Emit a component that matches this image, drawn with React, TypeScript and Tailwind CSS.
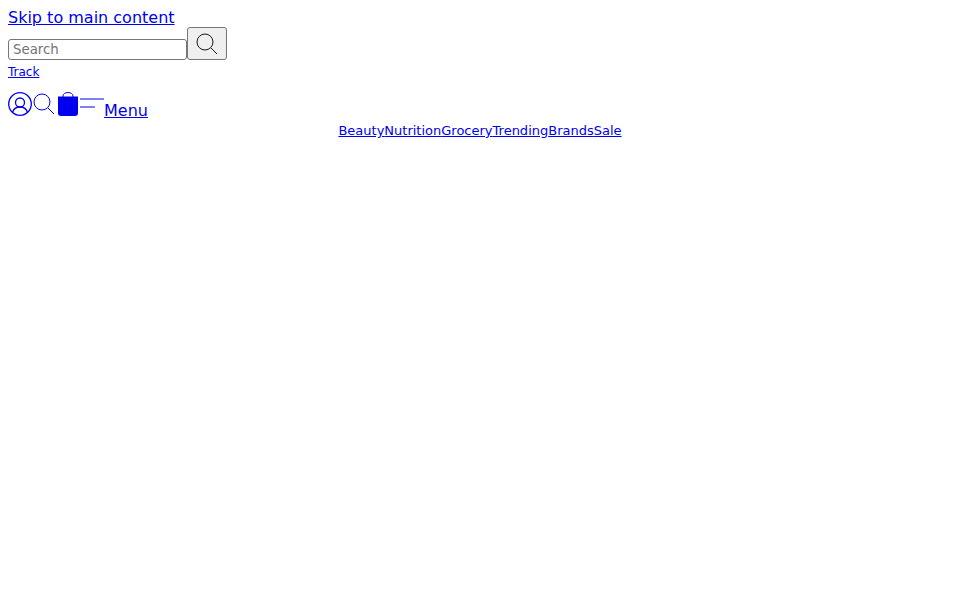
import React from 'react';

const navLinks = ['Beauty', 'Nutrition', 'Grocery', 'Trending', 'Brands', 'Sale'];

const linkClass = 'text-[#0000ee] underline';

const SearchIcon = ({ color }: { color: string }) => (
    <svg width="24" height="24" viewBox="0 0 24 24" fill="none" stroke={color} strokeWidth="1">
        <circle cx="10" cy="10" r="8" />
        <path d="M16 16l6 6" />
    </svg>
);

const App: React.FC = () => {
    return (
        <div className="min-h-[600px] bg-white px-2 font-['DejaVu_Sans',sans-serif] text-black">
            <div className="pt-2 text-base leading-[19px]">
                <a href="#main" className={linkClass}>
                    Skip to main content
                </a>
            </div>

            <form className="flex items-end">
                <input
                    type="text"
                    placeholder="Search"
                    className="h-[21px] w-[179px] rounded-[3px] border border-[#767676] px-1 text-[13.33px] placeholder:text-[#757575]"
                />
                <button
                    type="button"
                    className="flex h-[33px] w-10 items-center justify-center rounded-[3px] border border-[#767676] bg-[#efefef]"
                >
                    <SearchIcon color="#1a1a1a" />
                </button>
            </form>

            <div className="pt-1 text-xs leading-[16px]">
                <a href="#track" className={linkClass}>
                    Track
                </a>
            </div>

            <div className="flex items-start pt-3">
                <a href="#account" className="block">
                    <svg width="24" height="24" viewBox="0 0 24 24" fill="none" stroke="#0000ee" strokeWidth="1.300">
                        <circle cx="12" cy="12" r="11.300" />
                        <circle cx="12" cy="10.500" r="4.500" />
                        <path d="M4.500 20.500c1-3.500 4-5.500 7.500-5.500s6.500 2 7.500 5.500" />
                    </svg>
                </a>
                <a href="#search" className="block">
                    <SearchIcon color="#0000ee" />
                </a>
                <a href="#cart" className="block">
                    <svg width="24" height="24" viewBox="0 0 24 24" fill="#0000ee">
                        <path d="M2 4.500h20V21a3 3 0 0 1-3 3H5a3 3 0 0 1-3-3z" />
                        <path d="M7 5V4a5 3.500 0 0 1 10 0v1" fill="none" stroke="#0000ee" strokeWidth="1" />
                    </svg>
                </a>
                <a href="#menu" className="flex items-start">
                    <svg width="24" height="24" viewBox="0 0 24 24" fill="none" stroke="#0000ee" strokeWidth="1">
                        <path d="M0 7h24" />
                        <path d="M0 15h15" />
                    </svg>
                    <span className={`${linkClass} mt-[9px] text-base leading-[19px]`}>Menu</span>
                </a>
            </div>

            <nav className="flex justify-center pt-[3px] text-[13px] leading-[16px]">
                {navLinks.map((item) => (
                    <a key={item} href={`#${item.toLowerCase()}`} className={linkClass}>
                        {item}
                    </a>
                ))}
            </nav>
        </div>
    );
};

export default App;
